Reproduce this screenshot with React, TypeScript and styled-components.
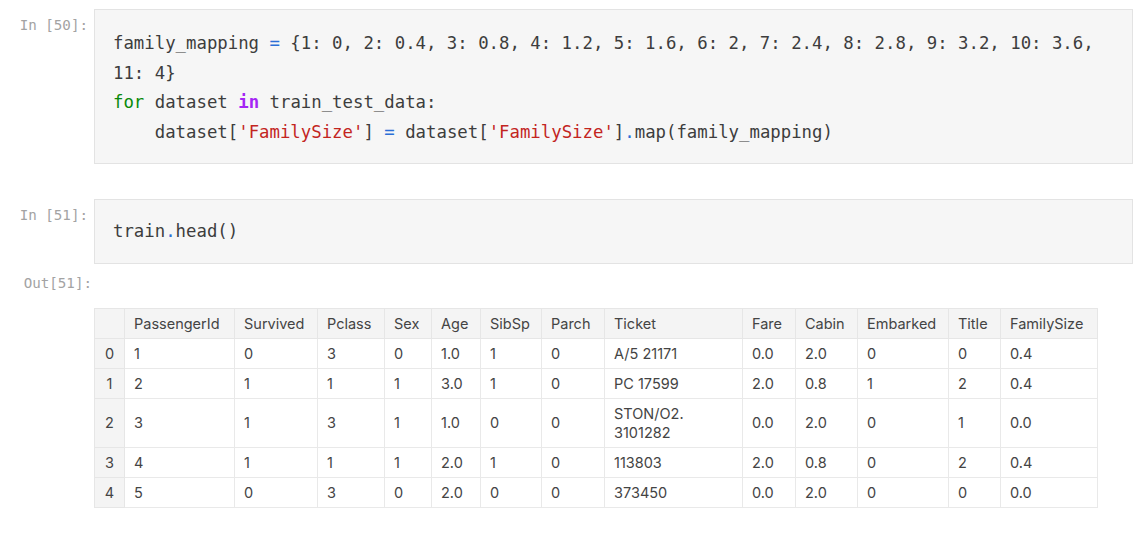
import React from "react";
import styled, { createGlobalStyle } from "styled-components";

const Global = createGlobalStyle`
  html, body { margin: 0; padding: 0; background: #ffffff; }
  body { font-family: Inter, "Noto Sans", sans-serif; }
`;

const Page = styled.div`
  display: flex;
  flex-direction: column;
  padding: 9px 5px 0 0;
  width: 1138px;
  box-sizing: border-box;
`;

const CellRow = styled.div<{ $gap?: number }>`
  display: grid;
  grid-template-columns: 94px 1fr;
  margin-bottom: ${(p) => p.$gap ?? 0}px;
`;

const Prompt = styled.div<{ $top: number; $right: number }>`
  font-family: "DejaVu Sans Mono", "Liberation Mono", monospace;
  font-size: 14.2px;
  color: #a3a3a3;
  text-align: right;
  padding-top: ${(p) => p.$top}px;
  padding-right: ${(p) => p.$right}px;
  line-height: 17px;
  white-space: pre;
`;

const CodeBox = styled.div<{ $top: number; $bottom: number }>`
  background: #f6f6f6;
  border: 1px solid #e3e3e3;
  padding: ${(p) => p.$top}px 20px ${(p) => p.$bottom}px 18px;
  font-family: "DejaVu Sans Mono", "Liberation Mono", monospace;
  font-size: 17.33px;
  line-height: 29.5px;
  color: #3d3d3d;
  white-space: pre-wrap;
`;

const Op = styled.span`color: #2b6fd6;`;
const Kw = styled.span`color: #0a8a0a;`;
const Kw2 = styled.span`color: #a526f5; font-weight: bold;`;
const Str = styled.span`color: #c3251f;`;

const Output = styled.div`
  padding-top: 44px;
`;

const Table = styled.table`
  border-collapse: collapse;
  table-layout: fixed;
  width: 1004px;
  font-family: Inter, "Noto Sans", sans-serif;
  font-size: 14.5px;
  color: #444444;
  margin-bottom: 30px;
`;

const Th = styled.th<{ $index?: boolean }>`
  background: #f4f4f4;
  border: 1px solid #e6e6e6;
  font-weight: 400;
  text-align: ${(p) => (p.$index ? "center" : "left")};
  padding: 5px 9px;
  line-height: 19px;
  height: 30px;
  box-sizing: border-box;
`;

const Td = styled.td`
  border: 1px solid #e9e9e9;
  text-align: left;
  padding: 5px 9px;
  line-height: 19px;
  height: 30px;
  box-sizing: border-box;
`;

const columns: [string, number][] = [
  ["", 30],
  ["PassengerId", 110],
  ["Survived", 83],
  ["Pclass", 67],
  ["Sex", 47],
  ["Age", 49],
  ["SibSp", 61],
  ["Parch", 63],
  ["Ticket", 138],
  ["Fare", 53],
  ["Cabin", 62],
  ["Embarked", 91],
  ["Title", 52],
  ["FamilySize", 97],
];

const rows: string[][] = [
  ["1", "0", "3", "0", "1.0", "1", "0", "A/5 21171", "0.0", "2.0", "0", "0", "0.4"],
  ["2", "1", "1", "1", "3.0", "1", "0", "PC 17599", "2.0", "0.8", "1", "2", "0.4"],
  ["3", "1", "3", "1", "1.0", "0", "0", "STON/O2. 3101282", "0.0", "2.0", "0", "1", "0.0"],
  ["4", "1", "1", "1", "2.0", "1", "0", "113803", "2.0", "0.8", "0", "2", "0.4"],
  ["5", "0", "3", "0", "2.0", "0", "0", "373450", "0.0", "2.0", "0", "0", "0.0"],
];

const line1 = "family_mapping ";
const dict = " {1: 0, 2: 0.4, 3: 0.8, 4: 1.2, 5: 1.6, 6: 2, 7: 2.4, 8: 2.8, 9: 3.2, 10: 3.6, 11: 4}\n";

export default function App() {
  return (
    <>
      <Global />
      <Page>
        <CellRow $gap={35}>
          <Prompt $top={8} $right={6}>In [50]:</Prompt>
          <CodeBox $top={19} $bottom={16}>
            {line1}<Op>=</Op>{dict}
            <Kw>for</Kw>{" dataset "}<Kw2>in</Kw2>{" train_test_data:\n    dataset["}
            <Str>'FamilySize'</Str>{"] "}<Op>=</Op>{" dataset["}<Str>'FamilySize'</Str>{"]"}
            <Op>.</Op>{"map(family_mapping)"}
          </CodeBox>
        </CellRow>
        <CellRow $gap={0}>
          <Prompt $top={8} $right={6}>In [51]:</Prompt>
          <CodeBox $top={17} $bottom={16}>
            {"train"}<Op>.</Op>{"head()"}
          </CodeBox>
        </CellRow>
        <CellRow $gap={0}>
          <Prompt $top={11} $right={2}>Out[51]:</Prompt>
          <Output>
            <Table>
              <colgroup>
                {columns.map(([, w], i) => (
                  <col key={i} style={{ width: w }} />
                ))}
              </colgroup>
              <thead>
                <tr>
                  {columns.map(([n], i) => (
                    <Th key={i} $index={i === 0}>{n}</Th>
                  ))}
                </tr>
              </thead>
              <tbody>
                {rows.map((r, i) => (
                  <tr key={i}>
                    <Th $index>{i}</Th>
                    {r.map((c, j) => (
                      <Td key={j}>{c}</Td>
                    ))}
                  </tr>
                ))}
              </tbody>
            </Table>
          </Output>
        </CellRow>
      </Page>
    </>
  );
}
